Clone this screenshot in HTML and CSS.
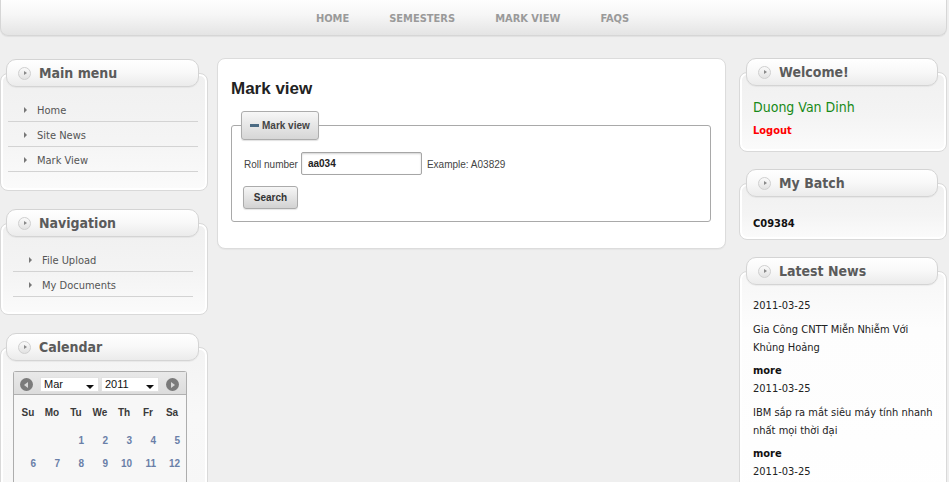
FILE: index.html
```html
<!DOCTYPE html>
<html>
<head>
<meta charset="utf-8">
<title>Mark view</title>
<link rel="stylesheet" href="styles.css">
</head>
<body>
<nav class="topnav">
  <a href="#">HOME</a>
  <a href="#">SEMESTERS</a>
  <a href="#">MARK VIEW</a>
  <a href="#">FAQS</a>
</nav>

<div class="layout">
  <aside class="col col-left">
    <section class="module">
      <div class="module-tab"><span class="tab-icon"></span>Main menu</div>
      <div class="module-body">
        <ul class="menu menu-main">
          <li>Home</li>
          <li>Site News</li>
          <li>Mark View</li>
        </ul>
      </div>
    </section>

    <section class="module">
      <div class="module-tab"><span class="tab-icon"></span>Navigation</div>
      <div class="module-body module-nav">
        <ul class="menu menu-nav">
          <li>File Upload</li>
          <li>My Documents</li>
        </ul>
      </div>
    </section>

    <section class="module">
      <div class="module-tab"><span class="tab-icon"></span>Calendar</div>
      <div class="module-body module-cal">
        <div class="cal">
          <div class="cal-head">
            <span class="cal-btn cal-prev"></span>
            <span class="cal-select cal-month">Mar</span>
            <span class="cal-select cal-year">2011</span>
            <span class="cal-btn cal-next"></span>
          </div>
          <div class="cal-days">
            <span>Su</span><span>Mo</span><span>Tu</span><span>We</span><span>Th</span><span>Fr</span><span>Sa</span>
          </div>
          <div class="cal-dates">
            <span></span><span></span><span>1</span><span>2</span><span>3</span><span>4</span><span>5</span>
            <span>6</span><span>7</span><span>8</span><span>9</span><span>10</span><span>11</span><span>12</span>
            <span>13</span><span>14</span><span>15</span><span>16</span><span>17</span><span>18</span><span>19</span>
            <span>20</span><span>21</span><span>22</span><span>23</span><span>24</span><span>25</span><span>26</span>
            <span>27</span><span>28</span><span>29</span><span>30</span><span>31</span><span></span><span></span>
          </div>
        </div>
      </div>
    </section>
  </aside>

  <main class="content">
    <h1 class="page-title">Mark view</h1>
    <fieldset class="markbox">
      <legend class="markbox-legend"><span class="dash"></span>Mark view</legend>
      <div class="form-row">
        <label class="form-label">Roll number</label>
        <input class="form-input" type="text" value="aa034">
        <span class="form-hint">Example: A03829</span>
      </div>
      <button class="btn" type="button">Search</button>
    </fieldset>
  </main>

  <aside class="col col-right">
    <section class="module">
      <div class="module-tab"><span class="tab-icon"></span>Welcome!</div>
      <div class="module-body welcome">
        <div class="user-name">Duong Van Dinh</div>
        <div class="logout">Logout</div>
      </div>
    </section>

    <section class="module">
      <div class="module-tab"><span class="tab-icon"></span>My Batch</div>
      <div class="module-body batch">
        <div class="batch-code">C09384</div>
      </div>
    </section>

    <section class="module">
      <div class="module-tab"><span class="tab-icon"></span>Latest News</div>
      <div class="module-body news">
        <div class="news-item">
          <div class="news-date">2011-03-25</div>
          <div class="news-title">Gia Công CNTT Miễn Nhiễm Với Khủng Hoảng</div>
          <div class="news-more">more</div>
        </div>
        <div class="news-item">
          <div class="news-date">2011-03-25</div>
          <div class="news-title">IBM sắp ra mắt siêu máy tính nhanh nhất mọi thời đại</div>
          <div class="news-more">more</div>
        </div>
        <div class="news-item">
          <div class="news-date">2011-03-25</div>
          <div class="news-title">Thị trường phần mềm Việt Nam tăng trưởng mạnh</div>
          <div class="news-more">more</div>
        </div>
      </div>
    </section>
  </aside>
</div>
</body>
</html>
```
FILE: styles.css
```css
html, body {
  margin: 0;
  padding: 0;
  overflow: hidden;
}

body {
  background: #efefef;
  font-family: "DejaVu Sans Condensed", "DejaVu Sans", sans-serif;
  font-size: 11px;
  color: #333;
}

/* ---------- top navigation ---------- */
.topnav {
  width: 947px;
  height: 36px;
  box-sizing: border-box;
  padding-top: 2px;
  padding-right: 2px;
  background: linear-gradient(#fefefe, #f7f7f7 40%, #e4e4e4);
  border: 1px solid #d6d6d6;
  border-top: none;
  border-radius: 0 0 8px 8px;
  box-shadow: 0 1px 1px rgba(0, 0, 0, 0.06);
  display: flex;
  justify-content: center;
  align-items: center;
  gap: 40px;
}

.topnav a {
  font-family: "DejaVu Sans Condensed", "DejaVu Sans", sans-serif;
  font-weight: bold;
  font-size: 11px;
  color: #9a9a9a;
  text-decoration: none;
}

/* ---------- layout ---------- */
.layout {
  display: flex;
  align-items: flex-start;
  padding-top: 22px;
}

.col {
  width: 208px;
  flex: none;
}

.col-left {
  padding-top: 1px;
}

.col-right {
  margin-left: 13px;
}

/* ---------- modules ---------- */
.module {
  margin-bottom: 17px;
}

.col-left .module {
  margin-bottom: 18px;
}

.module-tab {
  position: relative;
  z-index: 1;
  height: 28px;
  box-sizing: border-box;
  margin: 0 9px 0 6px;
  padding-left: 11px;
  border: 1px solid #d4d4d4;
  border-radius: 10px;
  background: linear-gradient(#ffffff, #f8f8f8 50%, #ebebeb);
  box-shadow: 0 1px 1px rgba(0, 0, 0, 0.05);
  display: flex;
  align-items: center;
  gap: 8px;
  font-family: "DejaVu Sans Condensed", "DejaVu Sans", sans-serif;
  font-weight: bold;
  font-size: 14px;
  color: #5b5b5b;
}

.col-right .module-tab {
  margin-left: 7px;
}

.tab-icon {
  width: 13px;
  height: 13px;
  box-sizing: border-box;
  border-radius: 50%;
  border: 1px solid #cfcfcf;
  background: linear-gradient(#fafafa, #e2e2e2);
  display: flex;
  align-items: center;
  justify-content: center;
}

.tab-icon::after {
  content: "";
  width: 0;
  height: 0;
  margin-left: 1px;
  border-left: 3px solid #8a8a8a;
  border-top: 2px solid transparent;
  border-bottom: 2px solid transparent;
}

.module-body {
  margin-top: -14px;
  border: 1px solid #d9d9d9;
  border-radius: 8px;
  background: linear-gradient(#f0f0f0, #f4f4f4 55%, #fbfbfb);
  box-shadow: inset 0 0 0 2px #ffffff;
  padding: 23px 0 18px;
}

.module-nav {
  padding-bottom: 17px;
}

/* ---------- menus ---------- */
.menu {
  list-style: none;
  margin: 0 9px 0 7px;
  padding: 0;
}

.menu-nav {
  margin: 0 14px 0 12px;
}

.menu li {
  height: 24px;
  box-sizing: border-box;
  height: 25px;
  padding-top: 2px;
  border-bottom: 1px solid #d3d3d3;
  display: flex;
  align-items: center;
  padding-left: 16px;
  color: #555;
  font-size: 11px;
}

.menu li::before {
  content: "";
  width: 0;
  height: 0;
  margin-right: 10px;
  border-left: 3px solid #777;
  border-top: 3px solid transparent;
  border-bottom: 3px solid transparent;
}

/* ---------- calendar ---------- */
.module-cal {
  padding-bottom: 0;
  height: 200px;
  background: linear-gradient(#f3f3f3, #f8f8f8 30%, #f6f6f6);
}

.cal {
  margin: 0 20px 0 12px;
  border: 1px solid #adadad;
  border-bottom: none;
  border-radius: 3px 3px 0 0;
  background: #f7f7f7;
  height: 200px;
  font-family: "Liberation Sans", Arial, sans-serif;
}

.cal-head {
  height: 23px;
  box-sizing: border-box;
  border-bottom: 1px solid #b0b0b0;
  background: linear-gradient(#e9e9e9, #dcdcdc);
  display: flex;
  align-items: center;
  padding: 3px 6px 0 6px;
}

.cal-btn {
  width: 13px;
  height: 13px;
  border-radius: 50%;
  background: #7b7b7b;
  display: flex;
  align-items: center;
  justify-content: center;
  flex: none;
}

.cal-prev::after {
  content: "";
  margin-right: 1px;
  border-right: 4px solid #d8d8d8;
  border-top: 3px solid transparent;
  border-bottom: 3px solid transparent;
}

.cal-next::after {
  content: "";
  margin-left: 1px;
  border-left: 4px solid #d8d8d8;
  border-top: 3px solid transparent;
  border-bottom: 3px solid transparent;
}

.cal-select {
  position: relative;
  height: 15px;
  box-sizing: border-box;
  background: #fff;
  border: 1px solid #e2e2e2;
  font-size: 11px;
  line-height: 12px;
  color: #111;
  padding-left: 3px;
}

.cal-select::after {
  content: "";
  position: absolute;
  right: 4px;
  bottom: 2px;
  border-top: 4px solid #111;
  border-left: 4px solid transparent;
  border-right: 4px solid transparent;
}

.cal-month {
  width: 59px;
  margin-left: 7px;
}

.cal-year {
  width: 58px;
  margin-left: 2px;
  margin-right: 7px;
}

.cal-days,
.cal-dates {
  display: grid;
  grid-template-columns: repeat(7, 24px);
  padding-left: 2px;
}

.cal-days {
  margin-top: 7px;
}

.cal-days span {
  height: 22px;
  line-height: 22px;
  text-align: center;
  font-weight: bold;
  font-size: 10px;
  color: #3a3a3a;
}

.cal-dates {
  margin-top: 5px;
}

.cal-dates span {
  height: 23px;
  line-height: 23px;
  text-align: right;
  padding-right: 4px;
  font-weight: bold;
  font-size: 10px;
  color: #6a7fa8;
}

/* ---------- main content ---------- */
.content {
  width: 509px;
  height: 191px;
  box-sizing: border-box;
  flex: none;
  margin-left: 9px;
  background: #fff;
  border: 1px solid #dcdcdc;
  border-radius: 8px;
  box-shadow: 0 1px 1px rgba(0, 0, 0, 0.04);
  padding: 20px 14px 26px 13px;
}

.page-title {
  margin: 0;
  font-family: "Liberation Sans", Arial, sans-serif;
  font-weight: bold;
  font-size: 17px;
  line-height: 20px;
  color: #222;
}

.markbox {
  margin: 12px 0 0;
  border: 1px solid #a9a9a9;
  border-radius: 3px;
  padding: 0 12px 12px 12px;
  font-family: "Liberation Sans", Arial, sans-serif;
  font-size: 10px;
  color: #444;
}

.markbox-legend {
  margin-left: -3px;
  height: 29px;
  box-sizing: border-box;
  padding: 0 8px;
  border: 1px solid #acacac;
  border-radius: 3px;
  background: linear-gradient(#f7f7f7, #e6e6e6 50%, #d6d6d6);
  box-shadow: 0 1px 1px rgba(0, 0, 0, 0.12);
  font-weight: bold;
  font-size: 10px;
  line-height: 27px;
  color: #444;
}

.dash {
  display: inline-block;
  width: 9px;
  height: 3px;
  background: #4b6a82;
  margin-right: 3px;
  vertical-align: middle;
  position: relative;
  top: -1px;
}

.form-row {
  display: flex;
  align-items: center;
  margin-top: 12px;
  height: 23px;
}

.form-label {
  color: #444;
  padding-top: 1px;
}

.form-hint {
  color: #444;
  padding-top: 1px;
}

.form-input {
  width: 121px;
  height: 23px;
  box-sizing: border-box;
  margin: 0 5px 0 3px;
  padding: 0 6px;
  border: 1px solid #a6a6a6;
  border-radius: 2px;
  box-shadow: inset 0 1px 2px rgba(0, 0, 0, 0.18);
  font-family: "Liberation Sans", Arial, sans-serif;
  font-weight: bold;
  font-size: 10px;
  color: #222;
  outline: none;
}

.btn {
  display: block;
  margin: 11px 0 0 -1px;
  width: 55px;
  height: 23px;
  border: 1px solid #ababab;
  border-radius: 3px;
  background: linear-gradient(#f6f6f6, #e4e4e4 50%, #d2d2d2);
  box-shadow: 0 1px 1px rgba(0, 0, 0, 0.1);
  font-family: "Liberation Sans", Arial, sans-serif;
  font-weight: bold;
  font-size: 10px;
  color: #333;
  padding: 0;
}

/* ---------- right column ---------- */
.welcome {
  padding: 25px 13px 11px;
}

.user-name {
  font-size: 14px;
  line-height: 18px;
  color: #178a17;
}

.logout {
  margin-top: 6px;
  font-weight: bold;
  font-size: 11px;
  line-height: 18px;
  color: #ff0000;
}

.batch {
  padding: 32px 13px 7px;
}

.batch-code {
  font-weight: bold;
  font-size: 11px;
  line-height: 16px;
  color: #111;
}

.news {
  padding: 25px 13px 10px;
  background: linear-gradient(#f6f6f6, #fdfdfd 20%, #ffffff);
}

.news-item {
  font-size: 11px;
  line-height: 18px;
  color: #222;
}

.news-title {
  margin: 6px 0 5px;
}

.news-more {
  font-weight: bold;
  color: #111;
}
```
